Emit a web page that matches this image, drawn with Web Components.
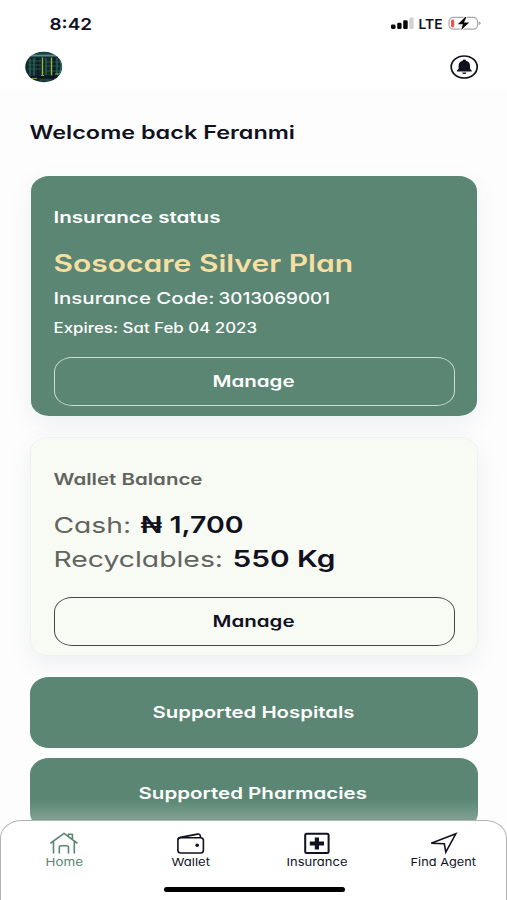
<!DOCTYPE html>
<html lang="en">
<head>
<meta charset="utf-8">
<title>Sosocare</title>
<style>
html,body{margin:0;padding:0}
body{width:507px;height:900px;overflow:hidden;background:#fdfdfd;color:#11111f;font-family:Inter,"Noto Sans",sans-serif}
</style>
</head>
<body>
<care-app></care-app>
<script>
const define = (name, html, setup) => customElements.define(name, class extends HTMLElement {
  constructor(){
    super();
    const t = document.createElement('template');
    t.innerHTML = html;
    this.attachShadow({mode:'open'}).append(t.content.cloneNode(true));
  }
  connectedCallback(){ if (setup) setup(this, this.shadowRoot); }
});

/* One line of wide geometric text: w = drawn width, s = size, h = line box, b = baseline */
define('wide-text', `<style>
:host{display:block;flex:none}
svg{display:block;overflow:visible}
text{fill:currentColor;font-feature-settings:"cv11";font-family:Inter,"Noto Sans",sans-serif}
</style><svg><text x="-0.5" lengthAdjust="spacingAndGlyphs"></text></svg>`, (el, root) => {
  const a = n => el.getAttribute(n);
  const svg = root.querySelector('svg'), t = root.querySelector('text');
  svg.setAttribute('width', a('w')); svg.setAttribute('height', a('h'));
  t.setAttribute('y', a('b')); t.setAttribute('textLength', a('w'));
  t.setAttribute('font-size', a('s')); t.setAttribute('font-weight', a('wt') || 600);
  t.textContent = a('label');
});

define('status-bar', `<style>
:host{display:flex;height:46px;box-sizing:border-box;padding:12px 26px 0 50px;justify-content:space-between;background:#fff}
.r{display:flex;align-items:flex-start}
svg{display:block}
</style>
<wide-text label="8:42" w="42.5" s="16.5" h="24" b="17.6" wt="600"></wide-text>
<div class="r">
<svg width="28" height="24" viewBox="0 0 28 24"><g fill="#080808"><rect x="0" y="12.6" width="4.6" height="4.4" rx="1.4"/><rect x="6.2" y="10.8" width="4.4" height="6.2" rx="1.3"/><rect x="12.2" y="8.3" width="4.5" height="8.7" rx="1.3"/></g><rect x="18.3" y="5.4" width="4.4" height="11.6" rx="1.3" fill="#d2d2d2"/></svg>
<wide-text label="LTE" w="24" s="13.4" h="24" b="16.7" wt="600"></wide-text>
<svg width="38" height="24" viewBox="0 0 38 24"><rect x="6" y="5.4" width="28.6" height="11.8" rx="4.2" fill="#fff" stroke="#a8a8a8" stroke-width="1.2"/><rect x="8" y="7.4" width="3.2" height="7.8" rx="1.3" fill="#f25350"/><path d="M35.7 9.3q2 .8 2 2t-2 2z" fill="#aaa"/><path d="M22.2 5 14.8 12.2h5.1L18.2 18l8-7.4h-5.2L23.4 5z" fill="#080808" stroke="#fff" stroke-width="1.8" stroke-linejoin="round" paint-order="stroke"/></svg>
</div>`);

define('top-bar', `<style>
:host{display:flex;height:43px;box-sizing:border-box;padding:5px 28px 0 25px;justify-content:space-between;background:#fff}
svg{display:block}
</style>
<svg width="38" height="32" viewBox="0 0 38 32"><defs><clipPath id="c"><ellipse cx="18.7" cy="16" rx="18.5" ry="15.2"/></clipPath></defs>
<g clip-path="url(#c)"><rect width="38" height="32" fill="#122a2b"/><path d="M3 4.5h32" stroke="#528e94" stroke-width="1.8"/><path d="M5 2.3h28" stroke="#174647" stroke-width="2"/>
<path d="M5 8v17M9 7v18M21 7v17M32 7v17" stroke="#20504b" stroke-width="2"/><path d="M13 7v17M29 7v17" stroke="#0b1b20" stroke-width="2"/><path d="M3 10h13M3 14h13M3 18h13M20 11h15M20 15h15M20 20h15" stroke="#2e634f" stroke-width=".8"/>
<path d="M17.5 6.5v19M26.5 6.5v18" stroke="#9cb842" stroke-width="1.3"/><path d="M2 26h33" stroke="#101523" stroke-width="2.5"/><path d="M7 27.4h5M16 24.5h3M30 23h4" stroke="#8ba542" stroke-width="1"/><path d="M15 29h12" stroke="#2a6060" stroke-width="1"/><path d="M35 8q3 8-1 16" stroke="#317782" stroke-width="1.3" fill="none"/></g></svg>
<svg width="29" height="32" viewBox="0 0 29 32"><ellipse cx="14.2" cy="16" rx="13" ry="11" fill="none" stroke="#11111f" stroke-width="1.7"/><path d="M12.6 9.8q.1-1.2 1.7-1.2t1.7 1.2q4 .9 4 5.1v2.8l1.7 1.9v1h-14.8v-1l1.7-1.9v-2.8q0-4.2 4-5.1z" fill="#11111f"/><path d="M12.1 21.4h4.4q-.3 1.6-2.2 1.6t-2.2-1.6z" fill="#11111f"/></svg>`);

define('outline-button', `<style>
:host{display:flex;height:49px;width:401px;box-sizing:border-box;border:1.3px solid var(--line);border-radius:18px/15px;justify-content:center;padding-top:10px;margin-left:-.5px}
</style><wide-text label="Manage" w="82" s="16" h="28" b="19.4" wt="600"></wide-text>`);

define('info-card', `<style>
:host{display:block;box-sizing:border-box;border-radius:18px/15px;box-shadow:0 8px 24px rgba(70,75,120,.08)}
</style><slot></slot>`);

define('link-button', `<style>
:host{display:flex;justify-content:center;box-sizing:border-box;width:448px;height:71px;background:#5a8673;color:#fff;border-radius:19px/16px;padding:22px 1px 0 0}
</style><slot></slot>`);

define('nav-item', `<style>
:host{display:flex;flex-direction:column;align-items:center;width:126.5px;box-sizing:border-box;padding-top:9px;flex:none}
</style><slot></slot>`);

define('bottom-nav', `<style>
:host{display:block;position:relative;box-sizing:border-box;width:507px;height:80px;margin-top:-1px;background:#fff;border:1px solid #b3b3b3;border-bottom:0;border-radius:22px 22px 0 0/18px 18px 0 0}
.items{display:flex;height:66px;width:506px}
.bar{width:181px;height:5px;border-radius:3px;background:#000;margin:0 0 0 162.5px}
svg{display:block}
.on{color:#5a8673}
</style>
<div class="items">
<nav-item class="on"><svg width="30" height="26" viewBox="0 0 30 26"><g fill="none" stroke="currentColor" stroke-width="1.6" stroke-linecap="round" stroke-linejoin="round"><path d="M1.8 13 15 3.4l13 9.6M4.5 12.2V23M25.3 12.2V23M19.4 6V4.3h4v5.2M10.3 23v-5.4q0-1.8 1.8-1.8h5.6q1.8 0 1.8 1.8V23"/></g></svg>
<wide-text label="Home" w="37.5" s="11" h="14" b="10.2" wt="400"></wide-text></nav-item>
<nav-item><svg width="30" height="26" viewBox="0 0 30 26"><g fill="none" stroke="#11111f" stroke-width="1.6" stroke-linejoin="round"><rect x="1.9" y="7.8" width="25.5" height="15.2" rx="2.8"/><path d="M2 9.7q0-1.8 2.5-2.3l17-3.3q2.2-.4 2.7 1.3l.5 2.4"/></g><circle cx="21.2" cy="15.3" r="1.8" fill="#11111f"/></svg>
<wide-text label="Wallet" w="38.5" s="11" h="14" b="10.2" wt="400"></wide-text></nav-item>
<nav-item><svg width="30" height="26" viewBox="0 0 30 26"><rect x="3.2" y="3.8" width="23.4" height="19.2" rx="1.5" fill="none" stroke="#11111f" stroke-width="2"/><path d="M12.8 7.4h4.2v4h5v4h-5v4h-4.2v-4h-5v-4h5z" fill="#11111f"/></svg>
<wide-text label="Insurance" w="61" s="11" h="14" b="10.2" wt="400"></wide-text></nav-item>
<nav-item><svg width="30" height="26" viewBox="0 0 30 26"><path d="M26.8 3.8 2.2 13.2l13.1.5L16.8 22.2z" fill="none" stroke="#11111f" stroke-width="1.6" stroke-linejoin="miter"/></svg>
<wide-text label="Find Agent" w="65.5" s="11" h="14" b="10.2" wt="400"></wide-text></nav-item>
</div><div class="bar"></div>`);

define('care-app', `<style>
:host{display:flex;flex-direction:column;width:507px;height:900px;overflow:hidden}
main{position:relative;height:732px;flex:none;overflow:hidden;box-sizing:border-box;padding-left:30px}
.hello{padding:31px 0 0 0}
.ins{width:446px;height:240px;margin:28px 0 0 1px;padding:27px 0 0 23px;background:#5a8673;color:#fff;--line:#c9ddd2}
.gold{color:#f6dfa2}
.wal{width:448px;height:219px;margin:21px 0 21px;padding:27px 0 0 23px;background:#f8fbf4;border:1px solid #eff1f0;--line:#44454a}
.g{color:#62645f}
.row{display:flex}
link-button+link-button{margin-top:10px}
.fade{position:absolute;left:30px;right:29px;bottom:0;height:22px;background:linear-gradient(rgba(255,255,255,0),rgba(255,255,255,.24))}
</style>
<status-bar></status-bar>
<top-bar></top-bar>
<main>
<div class="hello"><wide-text label="Welcome back Feranmi" w="265.5" s="18.3" h="28" b="18.7" wt="600"></wide-text></div>
<info-card class="ins">
<wide-text label="Insurance status" w="167" s="16" h="42" b="20.3" wt="600"></wide-text>
<wide-text class="gold" label="Sosocare Silver Plan" w="299.5" s="23.8" h="40" b="27.2" wt="600"></wide-text>
<div class="row"><wide-text label="Insurance Code:" w="161" s="16.4" h="31" b="18.5" wt="500"></wide-text><wide-text style="margin-left:4px" label="3013069001" w="111.5" s="16.4" h="31" b="18.5" wt="500"></wide-text></div>
<wide-text label="Expires: Sat Feb 04 2023" w="203.5" s="14.2" h="41" b="16.5" wt="500"></wide-text>
<outline-button></outline-button>
</info-card>
<info-card class="wal">
<wide-text class="g" label="Wallet Balance" w="149" s="16" h="42" b="19.5" wt="600"></wide-text>
<div class="row"><wide-text class="g" label="Cash:" w="77.5" s="22" h="34" b="26" wt="400"></wide-text><wide-text style="margin-left:9.5px" label="₦ 1,700" w="103" s="23.4" h="34" b="26" wt="600"></wide-text></div>
<div class="row"><wide-text class="g" label="Recyclables:" w="169.5" s="22" h="56" b="26" wt="400"></wide-text><wide-text style="margin-left:9.5px" label="550 Kg" w="103" s="23.4" h="56" b="26" wt="600"></wide-text></div>
<outline-button></outline-button>
</info-card>
<link-button><wide-text label="Supported Hospitals" w="202" s="16.3" h="28" b="19.4" wt="600"></wide-text></link-button>
<link-button><wide-text label="Supported Pharmacies" w="228.5" s="16.3" h="28" b="19.4" wt="600"></wide-text></link-button>
<div class="fade"></div>
</main>
<bottom-nav></bottom-nav>`);
</script>
</body>
</html>
